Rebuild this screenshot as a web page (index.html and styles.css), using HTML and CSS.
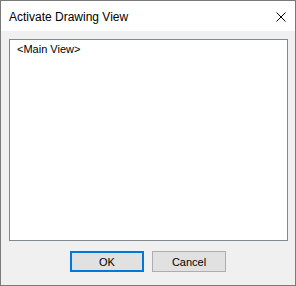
FILE: index.html
```html
<!DOCTYPE html>
<html>
<head>
<meta charset="utf-8">
<link rel="stylesheet" href="styles.css">
</head>
<body>
<div class="window">
  <div class="titlebar">
    <span class="title">Activate Drawing View</span>
    <svg class="close" width="10" height="10" viewBox="0 0 10 10">
      <path d="M0.5 0.5 L9.5 9.5 M9.5 0.5 L0.5 9.5" stroke="#000" stroke-width="1" fill="none"/>
    </svg>
  </div>
  <div class="content">
    <div class="listbox">
      <div class="item">&lt;Main View&gt;</div>
    </div>
    <div class="buttons">
      <button class="btn default">OK</button>
      <button class="btn">Cancel</button>
    </div>
  </div>
</div>
</body>
</html>
```
FILE: styles.css
```css
html, body {
  margin: 0;
  padding: 0;
  background: #fff;
}
.window {
  box-sizing: border-box;
  width: 296px;
  height: 286px;
  border: 1px solid #7a7a7a;
  display: flex;
  flex-direction: column;
  font-family: "Liberation Sans", Arial, sans-serif;
}
.titlebar {
  height: 30px;
  background: #fff;
  display: flex;
  align-items: center;
  justify-content: space-between;
  padding: 0 9px 0 8px;
  flex: none;
}
.title {
  font-size: 12px;
  color: #000;
  margin-top: 1px;
}
.close {
  display: block;
  margin-top: 1px;
}
.content {
  flex: 1;
  background: #f0f0f0;
  padding: 8px 7px 0 8px;
  display: flex;
  flex-direction: column;
}
.listbox {
  box-sizing: border-box;
  height: 202px;
  background: #fff;
  border: 1px solid #828790;
  padding: 3px 7px;
}
.item {
  font-size: 11px;
  color: #000;
  line-height: 13px;
}
.buttons {
  display: flex;
  justify-content: flex-start;
  gap: 8px;
  margin-top: 10px;
  padding-left: 61px;
}
.btn {
  box-sizing: border-box;
  width: 74px;
  height: 21px;
  background: #e1e1e1;
  border: 1px solid #adadad;
  font-family: "Liberation Sans", Arial, sans-serif;
  font-size: 11px;
  color: #000;
  padding: 0;
  margin: 0;
}
.btn.default {
  border: 2px solid #0078d7;
}
```
